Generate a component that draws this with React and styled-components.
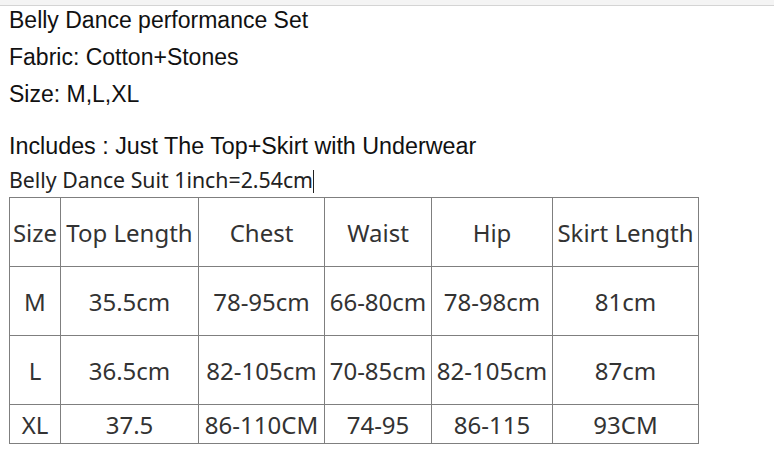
import React from 'react'
import styled, { createGlobalStyle } from 'styled-components'

const GlobalStyle = createGlobalStyle`
  html, body {
    margin: 0;
    padding: 0;
  }
  body {
    background: linear-gradient(#f4f4f4 0 5px, #d4d4d4 5px 6px, #ffffff 6px) no-repeat;
    background-color: #ffffff;
  }
`

const rows = [
  ['Size', 'Top Length', 'Chest', 'Waist', 'Hip', 'Skirt Length'],
  ['M', '35.5cm', '78-95cm', '66-80cm', '78-98cm', '81cm'],
  ['L', '36.5cm', '82-105cm', '70-85cm', '82-105cm', '87cm'],
  ['XL', '37.5', '86-110CM', '74-95', '86-115', '93CM'],
]

const colWidths = [51, 138, 126, 107, 121, 146]
const rowHeights = [69, 69, 69, 39]

const App = () => {
  return (
    <>
      <GlobalStyle />
      <Page>
        <Line>Belly Dance performance Set</Line>
        <Line>Fabric: Cotton+Stones</Line>
        <Line>Size: M,L,XL</Line>
        <Includes>Includes : Just The Top+Skirt with Underwear</Includes>
        <Note>
          Belly Dance Suit 1inch=2.54cm<Caret />
        </Note>
        <SizeTable>
          <colgroup>
            {colWidths.map((w, i) => (
              <col key={i} style={{ width: w }} />
            ))}
          </colgroup>
          <tbody>
            {rows.map((row, r) => (
              <tr key={r} style={{ height: rowHeights[r] }}>
                {row.map((cell, c) => (
                  <Cell key={c}>{cell}</Cell>
                ))}
              </tr>
            ))}
          </tbody>
        </SizeTable>
      </Page>
    </>
  )
}

const Page = styled.div`
  padding: 2px 0 0 9px;
  color: #111;
  font-family: 'Liberation Sans', Arial, sans-serif;
`

const Line = styled.div`
  font-size: 23px;
  line-height: 37px;
  white-space: nowrap;
`

const Includes = styled.div`
  font-size: 23.3px;
  line-height: 30px;
  margin-top: 18px;
  white-space: nowrap;
`

const Note = styled.div`
  font-family: 'Noto Sans', 'Open Sans', sans-serif;
  font-size: 21.3px;
  line-height: 30px;
  color: #222;
  margin-top: 4px;
  white-space: nowrap;
`

const Caret = styled.span`
  display: inline-block;
  width: 0;
  height: 23px;
  border-left: 1px solid #222;
  vertical-align: -5px;
`

const SizeTable = styled.table`
  border-collapse: collapse;
  table-layout: fixed;
  border: 1px solid #333;
  margin-top: 2px;
  font-family: 'Noto Sans', 'Open Sans', sans-serif;
  font-size: 24px;
  color: #333;
`

const Cell = styled.td`
  border: 1px solid #7f7f7f;
  padding: 0;
  text-align: center;
  white-space: nowrap;
`

export default App
